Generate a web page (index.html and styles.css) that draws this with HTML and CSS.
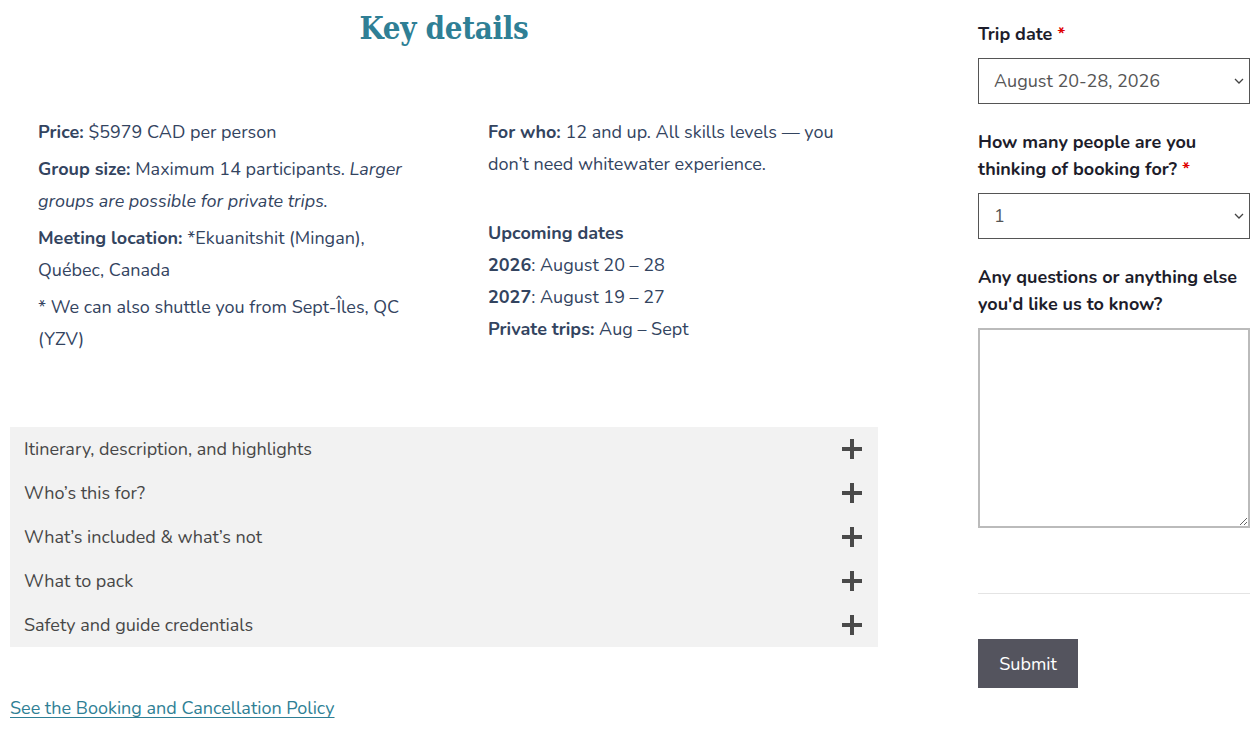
FILE: index.html
```html
<!DOCTYPE html>
<html lang="en">
<head>
<meta charset="utf-8">
<title>Key details</title>
<link rel="stylesheet" href="styles.css">
</head>
<body>
<div class="page">
  <main class="main">
    <h2 class="title">Key details</h2>
    <div class="details">
      <div class="col col-left">
        <p><strong>Price:</strong> $5979 CAD per person</p>
        <p><strong>Group size:</strong> Maximum 14 participants. <em>Larger groups are possible for private trips.</em></p>
        <p><strong>Meeting location:</strong> *Ekuanitshit (Mingan), Québec, Canada</p>
        <p>* We can also shuttle you from Sept-Îles, QC (YZV)</p>
      </div>
      <div class="col col-right">
        <p><strong>For who:</strong> 12 and up. All skills levels — you don’t need whitewater experience.<br>&nbsp;</p>
        <p><strong>Upcoming dates</strong><br><strong>2026</strong>: August 20 – 28<br><strong>2027</strong>: August 19 – 27<br><strong>Private trips:</strong> Aug – Sept</p>
      </div>
    </div>
    <div class="accordion">
      <div class="acc-row"><span>Itinerary, description, and highlights</span><span class="plus"></span></div>
      <div class="acc-row"><span>Who’s this for?</span><span class="plus"></span></div>
      <div class="acc-row"><span>What’s included &amp; what’s not</span><span class="plus"></span></div>
      <div class="acc-row"><span>What to pack</span><span class="plus"></span></div>
      <div class="acc-row"><span>Safety and guide credentials</span><span class="plus"></span></div>
    </div>
    <a class="policy" href="#">See the Booking and Cancellation Policy</a>
  </main>
  <aside class="form">
    <label class="lbl">Trip date <span class="req">*</span></label>
    <div class="select-wrap">
      <select class="select"><option>August 20-28, 2026</option></select>
      <svg class="chev" width="10" height="6" viewBox="0 0 10 6"><path d="M1 1l4 4 4-4" fill="none" stroke="#444" stroke-width="1.3"/></svg>
    </div>
    <label class="lbl">How many people are you thinking of booking for? <span class="req">*</span></label>
    <div class="select-wrap">
      <select class="select"><option>1</option></select>
      <svg class="chev" width="10" height="6" viewBox="0 0 10 6"><path d="M1 1l4 4 4-4" fill="none" stroke="#444" stroke-width="1.3"/></svg>
    </div>
    <label class="lbl">Any questions or anything else you'd like us to know?</label>
    <textarea class="textarea"></textarea>
    <hr class="rule">
    <button class="submit" type="button">Submit</button>
  </aside>
</div>
</body>
</html>
```

FILE: styles.css
```css
* { box-sizing: border-box; }
html, body { margin: 0; padding: 0; background: #fff; }
body {
  font-family: "Nunito", "Noto Sans", sans-serif;
  font-size: 18px;
  color: #33445f;
}
.page {
  display: flex;
  padding: 0 9px 0 10px;
  gap: 100px;
}
.main {
  width: 868px;
  flex: none;
}
.title {
  margin: 6px 0 0;
  text-align: center;
  font-family: "DejaVu Serif Condensed", "DejaVu Serif", serif;
  font-weight: bold;
  font-size: 31px;
  line-height: 44px;
  color: #2f7f95;
  letter-spacing: -0.3px;
}
.details {
  display: grid;
  grid-template-columns: 450px 418px;
  padding: 66px 0 0 28px;
}
.col p {
  margin: 0 0 5px;
  line-height: 32px;
}
.col-left { width: 386px; }
.col-right { width: 380px; }
strong { font-weight: 700; }
em { font-style: italic; }
.accordion {
  margin-top: 67px;
  background: #f2f2f2;
}
.acc-row {
  height: 44px;
  display: flex;
  align-items: center;
  justify-content: space-between;
  padding: 0 16px 0 14px;
  color: #474747;
}
.plus {
  position: relative;
  width: 20px;
  height: 20px;
}
.plus::before, .plus::after {
  content: "";
  position: absolute;
  background: #4a4a4a;
}
.plus::before { left: 0; top: 8px; width: 20px; height: 4px; }
.plus::after { left: 8px; top: 0; width: 4px; height: 20px; }
.policy {
  display: inline-block;
  margin-top: 50px;
  color: #2f7f95;
  text-decoration: underline;
  text-underline-offset: 3px;
  line-height: 22px;
}
.form {
  width: 272px;
  flex: none;
  padding-top: 21px;
  display: flex;
  flex-direction: column;
}
.lbl {
  font-weight: 700;
  color: #1d1d2b;
  line-height: 27px;
  margin-bottom: 10px;
}
.req { color: #e00000; }
.select-wrap {
  position: relative;
  margin-bottom: 25px;
}
.select {
  appearance: none;
  -webkit-appearance: none;
  width: 100%;
  height: 46px;
  border: 1px solid #555;
  border-radius: 0;
  background: #fff;
  padding: 0 15px;
  font-family: inherit;
  font-size: 18px;
  color: #555;
}
.chev {
  position: absolute;
  right: 6px;
  top: 20px;
}
.textarea {
  height: 200px;
  width: 100%;
  border: 2px solid #bbb;
  border-radius: 0;
  font-family: inherit;
  margin: 0;
}
.rule {
  border: 0;
  border-top: 1px solid #e4e4e4;
  margin: 65px 0 45px;
  width: 100%;
}
.submit {
  align-self: flex-start;
  width: 100px;
  height: 49px;
  border: 0;
  background: #54545e;
  color: #fff;
  font-family: inherit;
  font-size: 18px;
}
```
